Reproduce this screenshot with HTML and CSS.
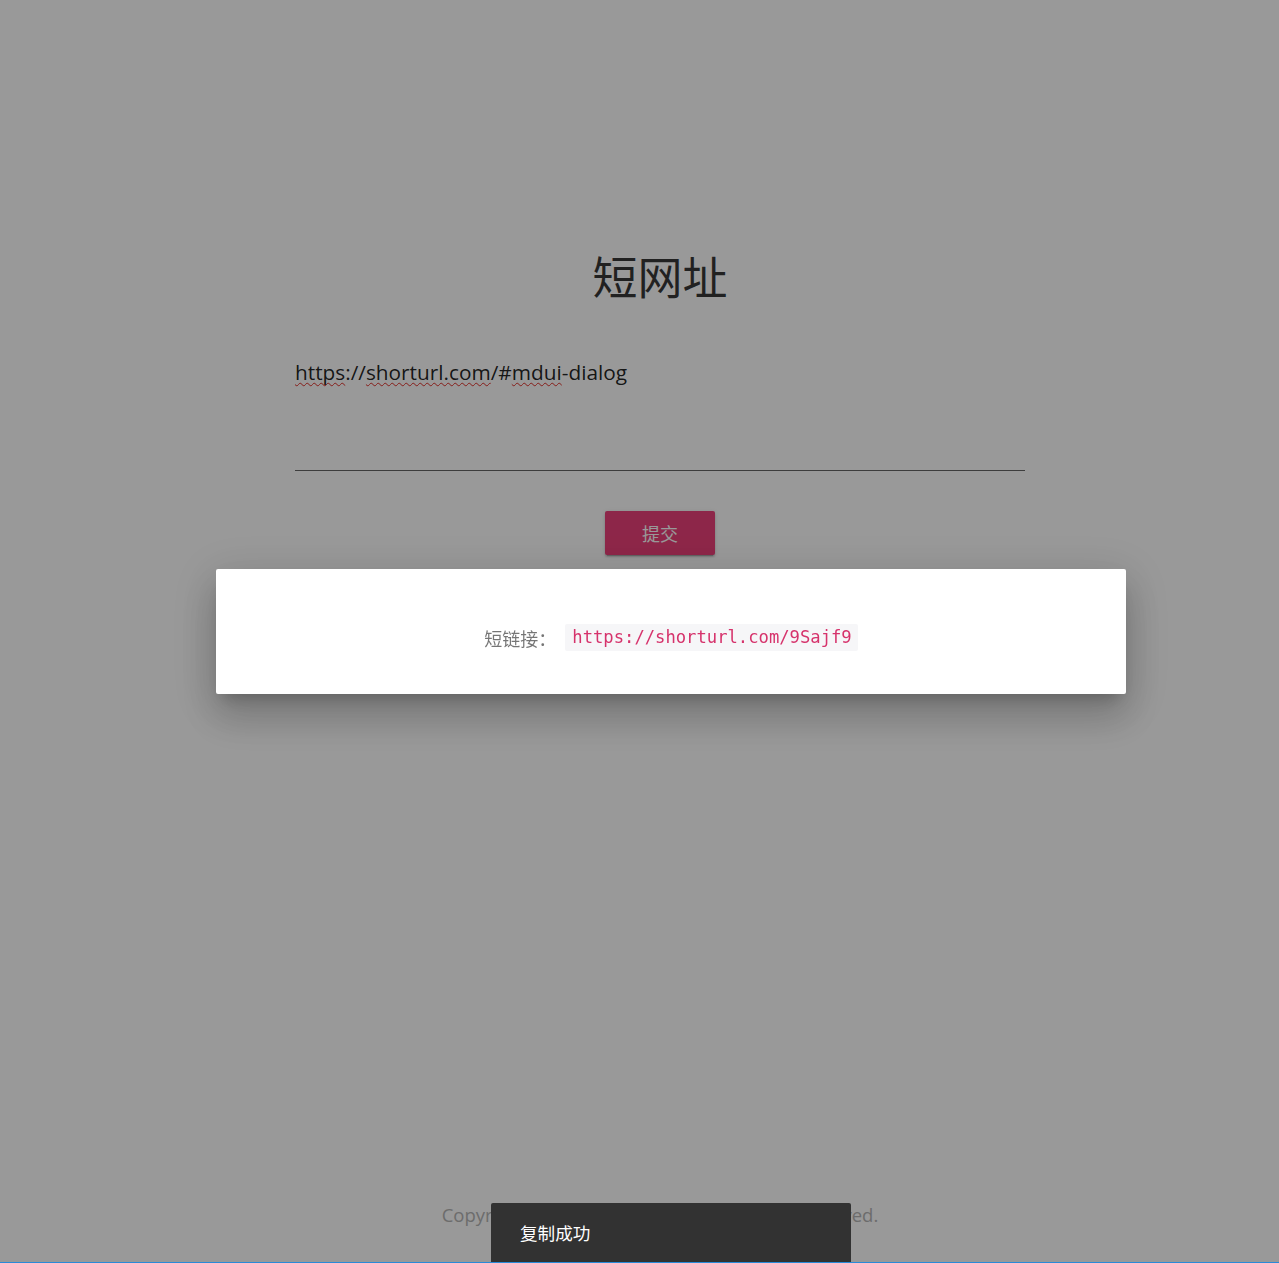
FILE: index.html
```html
<!DOCTYPE html>
<html lang="zh-CN">
<head>
<meta charset="utf-8">
<title>短网址</title>
<link rel="stylesheet" href="styles.css">
</head>
<body>
<main class="page">
  <h1 class="title">短网址</h1>
  <div class="field">
    <div class="field-input"><span class="misspelled">https</span>://<span class="misspelled">shorturl.com</span>/#<span class="misspelled">mdui</span>-dialog</div>
  </div>
  <div class="actions">
    <button class="btn" type="button">提交</button>
  </div>
  <footer class="footer">Copyright © 2021 shorturl.com. All rights reserved.</footer>
</main>

<div class="overlay"></div>

<div class="dialog">
  <div class="dialog-content">
    <span class="dialog-label">短链接：</span><code class="dialog-code">https://shorturl.com/9Sajf9</code>
  </div>
</div>

<div class="snackbar"><span class="snackbar-text">复制成功</span></div>

<div class="edge-line"></div>
</body>
</html>
```

FILE: styles.css
```css
html, body {
  margin: 0;
  padding: 0;
  height: 100%;
  background: #ffffff;
  font-family: "Open Sans", "Noto Sans CJK SC", sans-serif;
  overflow: hidden;
}

.page {
  width: 730px;
  margin-left: 295px;
  min-height: 1263px;
  display: flex;
  flex-direction: column;
  box-sizing: border-box;
  padding-top: 245px;
}

.title {
  margin: 0;
  text-align: center;
  font-family: "Noto Sans CJK SC", sans-serif;
  font-weight: 400;
  font-size: 45px;
  line-height: 62px;
  color: rgba(0, 0, 0, 0.78);
}

.field {
  margin-top: 51px;
  border-bottom: 1px solid rgba(0, 0, 0, 0.6);
}

.field-input {
  box-sizing: border-box;
  height: 112px;
  font-family: "Open Sans", "Noto Sans CJK SC", sans-serif;
  font-size: 20.8px;
  line-height: 29px;
  color: rgba(0, 0, 0, 0.87);
  white-space: nowrap;
}

.misspelled {
  text-decoration: underline wavy #e0302a;
  text-decoration-thickness: 1px;
  text-underline-offset: 2px;
  text-decoration-skip-ink: none;
}

.actions {
  display: flex;
  justify-content: center;
  margin-top: 40px;
}

.btn {
  width: 110px;
  height: 44px;
  border: none;
  border-radius: 2px;
  background: #ec407a;
  color: #ffffff;
  font-family: "Noto Sans CJK SC", sans-serif;
  font-size: 18px;
  box-shadow: 0 3px 1px -2px rgba(0,0,0,.2), 0 2px 2px 0 rgba(0,0,0,.14), 0 1px 5px 0 rgba(0,0,0,.12);
  padding: 0;
}

.footer {
  margin-top: auto;
  margin-bottom: 34px;
  margin-left: -40px;
  margin-right: -40px;
  text-align: center;
  font-size: 18.5px;
  line-height: 28px;
  color: #b5b5b5;
  white-space: nowrap;
}

.overlay {
  position: fixed;
  inset: 0;
  background: rgba(0, 0, 0, 0.4);
}

.dialog {
  position: fixed;
  left: 216px;
  top: 569px;
  width: 910px;
  height: 125px;
  background: #ffffff;
  border-radius: 2px;
  box-shadow: 0 11px 15px -7px rgba(0,0,0,.2), 0 24px 38px 3px rgba(0,0,0,.14), 0 9px 46px 8px rgba(0,0,0,.12);
  display: flex;
  align-items: center;
  justify-content: center;
}

.dialog-content {
  display: flex;
  align-items: center;
  padding-top: 12px;
}

.dialog-label {
  font-family: "Noto Sans CJK SC", sans-serif;
  font-size: 18px;
  color: rgba(0, 0, 0, 0.54);
  margin-right: 9px;
}

.dialog-code {
  font-family: "DejaVu Sans Mono", "Liberation Mono", monospace;
  font-size: 17.2px;
  line-height: 27px;
  color: #d6336c;
  background: #f6f6f8;
  padding: 0 6px 0 7px;
  border-radius: 2px;
}

.snackbar {
  position: fixed;
  left: 491px;
  top: 1203px;
  width: 360px;
  height: 60px;
  background: #323232;
  border-radius: 2px 2px 0 0;
  display: flex;
  align-items: center;
  padding: 0 29px 2px;
  box-sizing: border-box;
}

.snackbar-text {
  font-family: "Noto Sans CJK SC", sans-serif;
  font-size: 17.6px;
  color: #ffffff;
}

.edge-line {
  position: fixed;
  left: 0;
  right: 0;
  bottom: 0;
  height: 1px;
  background: #2a8ad8;
}
```
